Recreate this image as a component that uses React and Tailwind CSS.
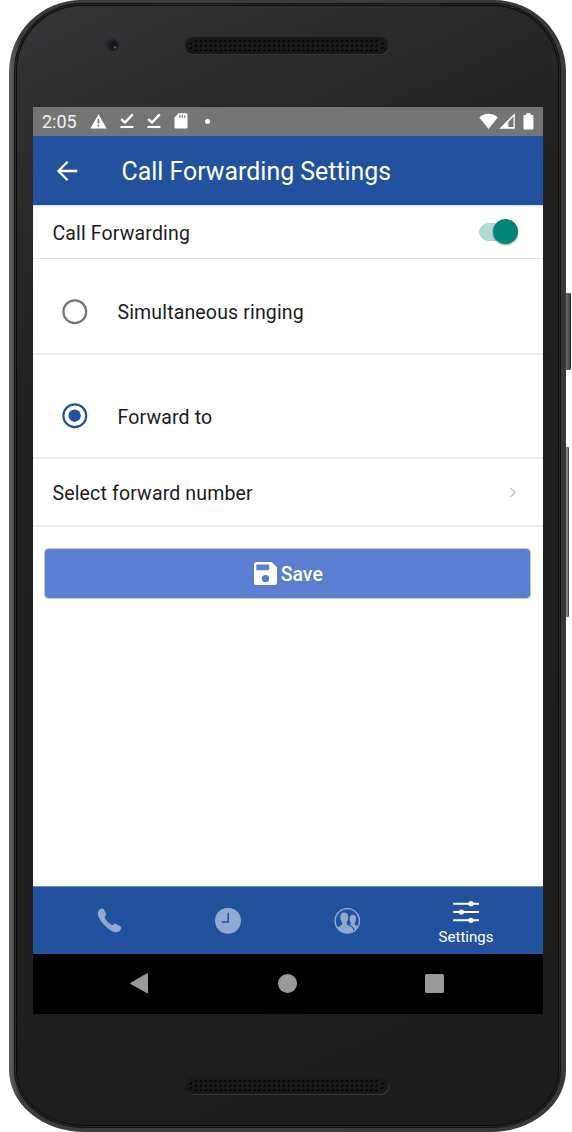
import React from "react";

function Speaker({ id, lip }) {
  const dots = [];
  for (let r = 0; r < 3; r++) {
    for (let c = 0; c < 38; c++) {
      dots.push([11 + c * 4.87, 4 + r * 4.6]);
    }
  }
  dots.push([6, 6.2], [6, 10.8], [197, 6.2], [197, 10.8]);
  return (
    <svg width="206" height="19" viewBox="0 0 206 19" className="block" aria-hidden="true">
      <rect x="1" y="1.2" width="203" height="16.7" rx="8.3" fill={lip} />
      <rect x="0" y="0" width="203.5" height="17.3" rx="8.6" fill="#19191a" />
      {dots.map(([x, y], i) => (
        <g key={id + i}>
          <circle cx={x} cy={y} r="1.3" fill="#050505" />
          <rect x={x - 1.4} y={y - 1.6} width="1" height="0.8" fill="#343436" />
        </g>
      ))}
    </svg>
  );
}

function DoneIcon() {
  return (
    <svg width="14" height="16" viewBox="0 0 14 16" className="block" fill="none" stroke="#fff">
      <path d="M1.2 6.2L5 9.6L12.8 1.2" strokeWidth="2.4" />
      <path d="M0.4 14H13.4" strokeWidth="2.1" />
    </svg>
  );
}

function StatusBar() {
  return (
    <div className="flex h-[29px] shrink-0 items-center bg-[#757575] text-white">
      <span className="ml-[9.5px] w-[47.5px] text-[18px] leading-none whitespace-nowrap text-[#f2f2f2]">2:05</span>
      <svg width="17" height="15" viewBox="0 0 17 15" className="block">
        <path d="M8.5 0.3L16.6 14.4H0.4Z" fill="#fff" />
        <path d="M8.5 5V9.6M8.5 10.8V12.5" stroke="#757575" strokeWidth="1.7" />
      </svg>
      <div className="-mt-px ml-[13px]"><DoneIcon /></div>
      <div className="-mt-px ml-[13px]"><DoneIcon /></div>
      <svg width="14" height="16" viewBox="0 0 14 16" className="-mt-px ml-[13px] block">
        <path d="M4.7 0.3H12Q13.5 0.3 13.5 1.8V14Q13.5 15.6 12 15.6H2Q0.5 15.6 0.5 14V4.6Z" fill="#fff" />
        <path d="M5.8 2V5M8.3 2V5M10.8 2V5" stroke="#757575" strokeWidth="1.1" />
      </svg>
      <span className="-mt-px ml-[17.5px] block h-[5px] w-[5px] rounded-full bg-white" />
      <div className="-mt-px ml-auto flex items-center pr-[9px]">
        <svg width="19" height="17" viewBox="0 0 19 17" className="block">
          <path d="M9.5 16L0.3 4.4Q4 0.8 9.5 0.8T18.7 4.4Z" fill="#fff" />
        </svg>
        <svg width="16" height="16" viewBox="0 0 16 16" className="ml-[1.5px] block">
          <path d="M0.3 15.7L15.8 0.2V15.7Z" fill="#fff" />
          <path d="M8.8 14.1V9.4L14.5 3.6V14.1Z" fill="#757575" />
          <path d="M9.2 13.9V9.6" stroke="#fff" strokeWidth="0.7" />
        </svg>
        <svg width="11" height="17" viewBox="0 0 11 17" className="ml-[7.5px] block">
          <path d="M3.2 0.3H7.6V2H9.2Q10.4 2 10.4 3.2V15.4Q10.4 16.6 9.2 16.6H1.7Q0.5 16.6 0.5 15.4V3.2Q0.5 2 1.7 2H3.2Z" fill="#fff" />
        </svg>
      </div>
    </div>
  );
}

function AppHeader() {
  return (
    <header className="flex h-[69px] shrink-0 items-center bg-[#22529d] text-white">
      <svg width="22" height="22" viewBox="0 0 22 22" className="ml-[23px] block" fill="none" stroke="#fff" strokeWidth="2.3">
        <path d="M21.2 11H3M11.6 1.7L2.4 11L11.6 20.3" />
      </svg>
      <h1 className="ml-[44px] pt-[3px] text-[24.9px] leading-none font-normal whitespace-nowrap">Call Forwarding Settings</h1>
    </header>
  );
}

function Switch() {
  return (
    <div className="relative mr-[24.5px] flex h-[26px] w-[39.5px] items-center">
      <span className="block h-[18px] w-[36px] rounded-full bg-[#b2dbd6]" />
      <span className="absolute top-0 right-0 h-[25px] w-[25px] rounded-full bg-[#018577] shadow-[0_1px_2px_rgba(0,0,0,0.45)]" />
    </div>
  );
}

function Radio({ checked }) {
  const color = checked ? "#22529d" : "#757575";
  return (
    <svg width="26" height="26" viewBox="0 0 26 26" className="block">
      <circle cx="12.8" cy="12.7" r="11.4" fill="none" stroke={color} strokeWidth="2.2" />
      {checked && <circle cx="12.6" cy="12.7" r="6.2" fill={color} />}
    </svg>
  );
}

function TabBar() {
  return (
    <nav className="grid h-[68px] shrink-0 grid-cols-[119px_119px_119px_119px] border-t border-[#6c8fc2] bg-[#22529d] pl-[17px]">
      <div className="flex items-center justify-center">
        <svg width="25" height="25" viewBox="0 0 25 25" className="block" fill="#91a9d0">
          <path d="M0.8 4.4Q1.6 1.3 4.8 0.5Q6.1 0.2 7 1.7L9 5.6Q9.5 6.8 8.5 7.8Q7.3 8.9 8 10.2Q9.9 13.9 14.3 16.7Q15.7 17.5 16.6 16.4Q17.7 15.2 19 15.8L23 18Q24.6 19 24.1 20.5Q23.3 23.7 20.3 24.3Q15 24.8 7.8 17.4Q0.2 9.5 0.8 4.4Z" />
        </svg>
      </div>
      <div className="flex items-center justify-center">
        <svg width="26" height="26" viewBox="0 0 26 26" className="block">
          <circle cx="13" cy="12.8" r="13" fill="#91a9d0" />
          <path d="M13.2 4.7V14H6.7" fill="none" stroke="#22529d" strokeWidth="1.6" />
        </svg>
      </div>
      <div className="flex items-center justify-center">
        <svg width="26" height="26" viewBox="0 0 26 26" className="block" fill="#91a9d0">
          <circle cx="13.3" cy="12.8" r="12.2" fill="none" stroke="#91a9d0" strokeWidth="1.5" />
          <path d="M10.2 4.4Q14.3 4.4 14.2 9Q14.2 12.6 12.6 14.2Q12.3 16.5 14 17.2L17 18.6Q19 19.7 19.5 22.6Q16.5 24.9 12.5 24.8Q7 24.5 3.2 19.6Q6.7 17.8 7.7 17.1Q8.7 16.3 7.9 14.2Q6.2 12.5 6.2 9Q6.2 4.5 10.2 4.4Z" />
          <path d="M18.8 6.8Q22 7 22 10.6Q22 13.8 20.7 15Q20.5 16.7 21.7 17.2L23.5 18Q22.5 20.5 20.6 21.8Q20 19.1 17.8 17.9L15.7 16.8Q17.2 16.3 16.9 15Q15.5 13.6 15.6 10.4Q15.8 6.9 18.8 6.8Z" />
        </svg>
      </div>
      <div className="flex flex-col items-center pt-[14px] text-white">
        <svg width="26" height="22" viewBox="0 0 26 22" className="block" fill="#fff">
          <path d="M0.8 2.7H25.8M0.8 11H25.8M0.8 19.3H25.8" stroke="#fff" strokeWidth="1.9" strokeLinecap="round" />
          <circle cx="18" cy="2.7" r="2.6" />
          <circle cx="8.4" cy="11" r="2.6" />
          <circle cx="18" cy="19.3" r="2.6" />
        </svg>
        <span className="mt-[7px] text-[15px] leading-none">Settings</span>
      </div>
    </nav>
  );
}

function SystemNav() {
  return (
    <div className="flex h-[60px] shrink-0 items-center bg-black pb-[2px]">
      <svg width="19" height="21" viewBox="0 0 19 21" className="ml-[97px] block" fill="#999">
        <path d="M0.6 9.7L16.6 0.5Q18 0 18 1.4V19.2Q18 20.6 16.6 20.1L0.6 10.9Q-0.2 10.3 0.6 9.7Z" />
      </svg>
      <span className="ml-[129px] block h-[19px] w-[19px] rounded-full bg-[#999]" />
      <span className="ml-[128px] block h-[19px] w-[19px] rounded-[1.5px] bg-[#999]" />
    </div>
  );
}

function Screen() {
  return (
    <div className="mx-auto flex h-[907px] w-[510px] flex-col bg-white text-[#1c1c1c]">
      <StatusBar />
      <AppHeader />
      <main className="flex grow flex-col text-[19.5px] leading-none tracking-[0.15px]">
        <div className="flex h-[54px] items-center justify-between border-b border-[#e2e2e2] pl-[20px] shadow-[inset_0_2px_2px_-1px_rgba(0,0,0,0.15)]">
          <span className="pt-[4px]">Call Forwarding</span>
          <Switch />
        </div>
        <div className="flex h-[96px] items-center border-b-2 border-[#efefef] pt-[11px] pl-[29px]">
          <Radio />
          <span className="ml-[30px] pt-[3px]">Simultaneous ringing</span>
        </div>
        <div className="flex h-[104px] items-center border-b-2 border-[#efefef] pt-[20px] pl-[29px]">
          <Radio checked />
          <span className="ml-[30px] pt-[3px]">Forward to</span>
        </div>
        <div className="flex h-[68px] items-center justify-between border-b-2 border-[#efefef] pl-[20px]">
          <span className="pt-[3px]">Select forward number</span>
          <svg width="8" height="11" viewBox="0 0 8 11" className="mr-[26px] block" fill="none" stroke="#c8c8cc" strokeWidth="1.6">
            <path d="M1.3 1L6 5.5L1.3 10" />
          </svg>
        </div>
        <button className="mt-[21px] ml-[11px] flex h-[51px] w-[487px] items-center justify-center rounded-[4px] border border-[#b9c9ea] bg-[#5b7ed0] bg-clip-padding pl-[3px] font-medium text-white">
          <svg width="23" height="23" viewBox="0 0 23 23" className="block">
            <path fill="#fff" fillRule="evenodd" d="M2.3 0H17.7L23 5.3V20.7Q23 23 20.7 23H2.3Q0 23 0 20.7V2.3Q0 0 2.3 0ZM2.3 2.5V8.2H15.2V2.5ZM11.5 12.9A3.7 3.7 0 1 0 11.5 20.3A3.7 3.7 0 1 0 11.5 12.9Z" />
          </svg>
          <span className="ml-[3.5px] pt-[2px] text-[19.5px] leading-none tracking-normal">Save</span>
        </button>
      </main>
      <TabBar />
      <SystemNav />
    </div>
  );
}

export default function App() {
  return (
    <div className="relative h-[1132px] w-[572px] overflow-hidden bg-white pl-[9px] font-['Roboto',sans-serif]">
      <div className="absolute top-[293px] left-[564px] h-[77px] w-[7px] rounded-r-[2px] border-r border-[#222] bg-linear-to-r from-[#555] via-[#666] to-[#3b3b3b]" />
      <div className="absolute top-[447px] left-[564px] h-[170px] w-[5px] rounded-r-[1px] border-r border-[#444] bg-[#85827f]" />
      <div className="relative h-[1132px] w-[557px] rounded-t-[72px] rounded-b-[75px_62px] bg-linear-to-r from-[#626060] via-[#3d3b3c] via-[2%] to-[#3a3738] px-[5px] pt-[3px] pb-[4px]">
        <div className="h-full rounded-t-[68px] rounded-b-[70px_58px] bg-[#111112] px-[1px] pt-[1px] pb-[1px]">
          <div className="h-full rounded-t-[67px] rounded-b-[69px_57px] bg-[#2b2b2c] p-[1px]">
            <div className="h-full rounded-t-[66px] rounded-b-[68px_56px] bg-[#0b0b0c] p-[1px]">
              <div className="flex h-full flex-col rounded-t-[65px] rounded-b-[67px_55px] bg-[linear-gradient(155deg,#353537_0%,#2c2c2d_12%,#202021_30%,#1d1d1e_100%)]">
                <div className="flex h-[101px] shrink-0 items-start pt-[27px] pl-[83px]">
                  <svg width="24" height="24" viewBox="0 0 24 24" className="mt-0 block">
                    <circle cx="12.5" cy="12" r="10.5" fill="#303032" stroke="#3a3a3c" strokeWidth="0.7" />
                    <circle cx="12.8" cy="12" r="6" fill="#202028" />
                    <circle cx="13.6" cy="12.5" r="4" fill="#191923" />
                    <circle cx="15" cy="14.4" r="1.2" fill="#80505c" />
                  </svg>
                  <div className="mt-[4px] ml-[61px]"><Speaker id="top" lip="#404042" /></div>
                </div>
                <Screen />
                <div className="flex justify-center pt-[63px]"><Speaker id="bottom" lip="#424244" /></div>
              </div>
            </div>
          </div>
        </div>
      </div>
    </div>
  );
}
